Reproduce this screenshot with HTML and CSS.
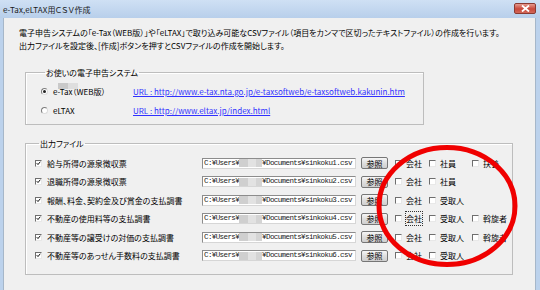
FILE: index.html
```html
<!DOCTYPE html>
<html lang="ja">
<head>
    <meta charset="UTF-8">
    <meta name="viewport" content="width=device-width, initial-scale=1.0">
    <title>e-Tax,eLTAX用ＣＳＶ作成</title>
    <link rel="stylesheet" href="styles.css">
</head>
<body>
    <div class="window">
        <div class="titlebar">
            <span class="title">e-Tax,eLTAX用ＣＳＶ作成</span>
            <span class="close-btn">
                <svg width="9" height="7" viewBox="0 0 9 7"><path d="M1 0.5 L8 6.5 M8 0.5 L1 6.5" stroke="#fff" stroke-width="1.8"/></svg>
            </span>
        </div>

        <div class="client">
            <p class="intro">電子申告システムの「e-Tax（WEB版）」や「eLTAX」で取り込み可能なCSVファイル（項目をカンマで区切ったテキストファイル）の作成を行います。</p>
            <p class="intro">出力ファイルを設定後、[作成]ボタンを押すとCSVファイルの作成を開始します。</p>

            <fieldset class="group system-group">
                <legend>お使いの電子申告システム</legend>
                <span class="legend-smudge"></span>
                <div class="radio-row">
                    <span class="radio-item"><span class="radio checked"></span>e-Tax（WEB版）</span>
                    <a class="link" href="#">URL : http://www.e-tax.nta.go.jp/e-taxsoftweb/e-taxsoftweb.kakunin.htm</a>
                </div>
                <div class="radio-row">
                    <span class="radio-item"><span class="radio"></span>eLTAX</span>
                    <a class="link" href="#">URL : http://www.eltax.jp/index.html</a>
                </div>
            </fieldset>

            <fieldset class="group output-group">
                <legend>出力ファイル</legend>

                <div class="file-row">
                    <span class="file-name"><span class="check"><svg viewBox="0 0 7 7"><path d="M1 3 L2.8 5 L6 1" /></svg></span>給与所得の源泉徴収票</span>
                    <span class="path-box">C:¥Users¥<span class="blur"></span>¥Documents¥sinkoku1.csv</span>
                    <span class="browse">参照</span>
                    <span class="opts">
                        <span class="opt opt-1"><span class="check"></span>会社</span>
                        <span class="opt opt-2"><span class="check"></span>社員</span>
                        <span class="opt"><span class="check"></span>扶養</span>
                    </span>
                </div>

                <div class="file-row">
                    <span class="file-name"><span class="check"><svg viewBox="0 0 7 7"><path d="M1 3 L2.8 5 L6 1" /></svg></span>退職所得の源泉徴収票</span>
                    <span class="path-box">C:¥Users¥<span class="blur"></span>¥Documents¥sinkoku2.csv</span>
                    <span class="browse">参照</span>
                    <span class="opts">
                        <span class="opt opt-1"><span class="check"></span>会社</span>
                        <span class="opt opt-2"><span class="check"></span>社員</span>
                    </span>
                </div>

                <div class="file-row">
                    <span class="file-name"><span class="check"><svg viewBox="0 0 7 7"><path d="M1 3 L2.8 5 L6 1" /></svg></span>報酬、料金、契約金及び賞金の支払調書</span>
                    <span class="path-box">C:¥Users¥<span class="blur"></span>¥Documents¥sinkoku3.csv</span>
                    <span class="browse">参照</span>
                    <span class="opts">
                        <span class="opt opt-1"><span class="check"></span>会社</span>
                        <span class="opt opt-2"><span class="check"></span>受取人</span>
                    </span>
                </div>

                <div class="file-row">
                    <span class="file-name"><span class="check"><svg viewBox="0 0 7 7"><path d="M1 3 L2.8 5 L6 1" /></svg></span>不動産の使用料等の支払調書</span>
                    <span class="path-box">C:¥Users¥<span class="blur"></span>¥Documents¥sinkoku4.csv</span>
                    <span class="browse">参照</span>
                    <span class="opts">
                        <span class="opt opt-1"><span class="check"></span><span class="focus">会社</span></span>
                        <span class="opt opt-2"><span class="check"></span>受取人</span>
                        <span class="opt"><span class="check"></span>斡旋者</span>
                    </span>
                </div>

                <div class="file-row">
                    <span class="file-name"><span class="check"><svg viewBox="0 0 7 7"><path d="M1 3 L2.8 5 L6 1" /></svg></span>不動産等の譲受けの対価の支払調書</span>
                    <span class="path-box">C:¥Users¥<span class="blur"></span>¥Documents¥sinkoku5.csv</span>
                    <span class="browse">参照</span>
                    <span class="opts">
                        <span class="opt opt-1"><span class="check"></span>会社</span>
                        <span class="opt opt-2"><span class="check"></span>受取人</span>
                        <span class="opt"><span class="check"></span>斡旋者</span>
                    </span>
                </div>

                <div class="file-row">
                    <span class="file-name"><span class="check"><svg viewBox="0 0 7 7"><path d="M1 3 L2.8 5 L6 1" /></svg></span>不動産等のあっせん手数料の支払調書</span>
                    <span class="path-box">C:¥Users¥<span class="blur"></span>¥Documents¥sinkoku6.csv</span>
                    <span class="browse">参照</span>
                    <span class="opts">
                        <span class="opt opt-1"><span class="check"></span>会社</span>
                        <span class="opt opt-2"><span class="check"></span>受取人</span>
                    </span>
                </div>
            </fieldset>
        </div>

        <!-- red marker drawn over the screenshot -->
        <svg class="marker" width="142" height="124" viewBox="0 0 142 124">
            <ellipse cx="71" cy="62" rx="68" ry="58.5" fill="none" stroke="#f00000" stroke-width="5"/>
        </svg>
    </div>
</body>
</html>
```

FILE: styles.css
```css
:root {
    --frame: #bcd2ec;
    --client-bg: #f0f0f0;
    --group-line: #bdbdbd;
    --link: #3030ff;
}

* {
    box-sizing: border-box;
}

body {
    margin: 0;
    background: var(--frame);
    font-family: "Noto Sans CJK JP", "Noto Sans", sans-serif;
    font-size: 8px;
    line-height: 13px;
    color: #000;
    font-feature-settings: "palt";
}

.window {
    position: relative;
    width: 540px;
    height: 290px;
    overflow: hidden;
    display: flex;
    flex-direction: column;
}

.titlebar {
    height: 18px;
    display: flex;
    align-items: center;
    justify-content: space-between;
    padding: 1px 4px 0 3px;
    background: linear-gradient(#cfe0f4, #b8cfeb);
}

.title {
    color: #1a1a1a;
    letter-spacing: 0.1px;
}

.close-btn {
    width: 22px;
    height: 11px;
    margin-top: -2px;
    display: flex;
    align-items: center;
    justify-content: center;
    border: 1px solid #8a3a32;
    border-radius: 2px;
    background: linear-gradient(#e59a8e, #c9473a 55%, #d2695a);
}

.client {
    flex: 1;
    margin: 0 4px 0 3px;
    padding: 8px 0 0 15px;
    background: var(--client-bg);
    border-left: 1px solid #a6b7c9;
    border-right: 1px solid #a6b7c9;
}

.intro {
    margin: 0;
}

.group {
    position: relative;
    margin: 14px 0 0 6px;
    padding: 0;
    border: 1px solid var(--group-line);
    box-shadow: inset 1px 1px 0 #fff;
}

.group legend {
    margin-left: 4px;
    padding: 0 1px;
}

.system-group {
    width: 399px;
    padding: 3px 0 4px 15px;
}

.legend-smudge {
    position: absolute;
    left: 32px;
    top: 4px;
    width: 20px;
    height: 6px;
    background: linear-gradient(90deg, #c9c9c9 50%, #dedede 50%);
}

.radio-row {
    height: 19px;
    display: flex;
    align-items: center;
}

.radio-item {
    width: 92px;
    display: flex;
    align-items: center;
}

.radio {
    width: 7px;
    height: 7px;
    margin-right: 5px;
    border-radius: 50%;
    border: 1px solid;
    border-color: #7c7c7c #dcdcdc #dcdcdc #7c7c7c;
    background: #fff;
    display: flex;
    align-items: center;
    justify-content: center;
}

.radio.checked::after {
    content: "";
    width: 3px;
    height: 3px;
    border-radius: 50%;
    background: #222;
}

.link {
    color: var(--link);
    text-decoration: underline;
}

.output-group {
    width: 488px;
    margin-top: 12px;
    padding: 4px 0 9px 9px;
}

.file-row {
    height: 18.5px;
    display: flex;
    align-items: center;
}

.file-name {
    width: 167px;
    display: flex;
    align-items: center;
}

.check {
    width: 7px;
    height: 7px;
    flex: none;
    margin-right: 5px;
    border: 1px solid;
    border-color: #6e6e6e #e8e8e8 #e8e8e8 #6e6e6e;
    background: #fff;
    display: flex;
}

.check svg {
    width: 5px;
    height: 5px;
    fill: none;
    stroke: #111;
    stroke-width: 1.4;
}

.path-box {
    width: 154px;
    height: 11px;
    padding-left: 1px;
    display: flex;
    align-items: center;
    border: 1px solid;
    border-color: #8c8c8c #d6d6d6 #d6d6d6 #8c8c8c;
    background: #fff;
    font-family: "Liberation Mono", monospace;
    font-size: 7.5px;
    letter-spacing: -0.6px;
    white-space: nowrap;
    overflow: hidden;
    color: #222;
}

.blur {
    width: 23px;
    height: 8px;
    flex: none;
    background: linear-gradient(90deg, #cfcfcf 0 40%, #e2e2e2 40% 75%, #d4d4d4 75%);
}

.browse {
    width: 27px;
    height: 12px;
    margin-left: 5px;
    display: flex;
    align-items: center;
    justify-content: center;
    border: 1px solid #767676;
    border-radius: 2px;
    background: linear-gradient(#f6f6f6, #dedede 50%, #cfcfcf);
}

.opts {
    margin-left: 7px;
    display: flex;
    align-items: center;
}

.opt {
    display: flex;
    align-items: center;
}

.opt .check {
    margin-right: 4px;
}

.opt-1 {
    width: 34px;
}

.opt-2 {
    width: 43px;
}

.focus {
    outline: 1px dotted #333;
    outline-offset: 0;
}

.marker {
    position: absolute;
    left: 376px;
    top: 144px;
}
```
